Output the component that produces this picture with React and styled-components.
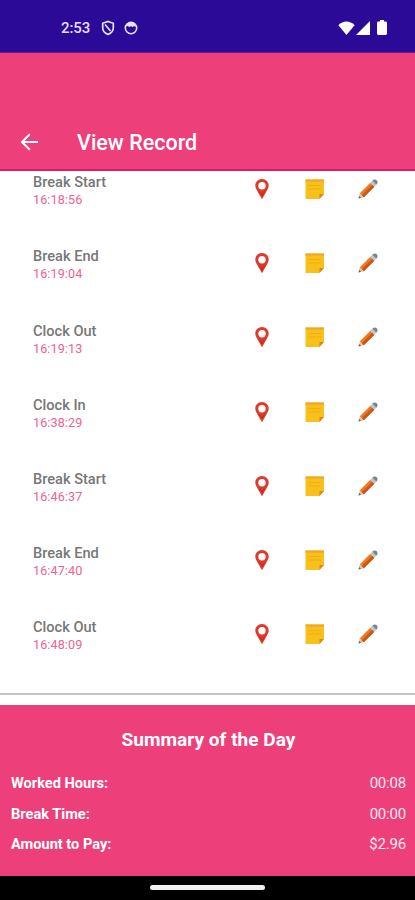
import React from "react";
import styled, { createGlobalStyle } from "styled-components";

const GlobalStyle = createGlobalStyle`
  * { box-sizing: border-box; }
  body { margin: 0; background: #fff; font-family: Roboto, "Liberation Sans", sans-serif; }
`;

const Screen = styled.div`
  width: 415px;
  height: 900px;
  display: flex;
  flex-direction: column;
  overflow: hidden;
  background: #fff;
`;

const StatusBar = styled.div`
  height: 53px;
  flex: none;
  display: flex;
  justify-content: space-between;
  align-items: center;
  padding: 3px 28px 0 61px;
  background: #2a0a96;
  border-bottom: 1px solid #6b1a8c;
  color: #e6defa;
`;

const StatusGroup = styled.div`
  display: flex;
  align-items: center;
  gap: ${(p) => p.$gap}px;
`;

const BatterySlot = styled.span`
  display: flex;
  margin-left: 6px;
`;

const Clock = styled.span`
  font-size: 15px;
  font-weight: 500;
  line-height: 18px;
  width: 29px;
  letter-spacing: -0.1px;
  margin-right: 2px;
`;

const AppBar = styled.header`
  height: 118px;
  flex: none;
  display: flex;
  align-items: flex-end;
  gap: 38px;
  padding: 0 20px 14px;
  background: #ed407a;
  border-bottom: 2px solid #e01868;
  color: #fff;
`;

const BackButton = styled.button`
  display: flex;
  padding: 0;
  margin-bottom: 4px;
  border: 0;
  background: none;
  color: inherit;
`;

const Title = styled.h1`
  margin: 0;
  font-size: 21.5px;
  font-weight: 500;
  line-height: 24px;
`;

const List = styled.ul`
  flex: none;
  height: 521.5px;
  margin: 0;
  padding: 0;
  list-style: none;
  overflow: hidden;

  > li:first-child { margin-top: -19px; }
`;

const Row = styled.li`
  height: 74.2px;
  display: flex;
  align-items: center;
  justify-content: space-between;
  padding: 0 36px 0 33px;
`;

const Entry = styled.div`
  display: flex;
  flex-direction: column;
  padding-top: 4.4px;
`;

const EntryName = styled.span`
  font-size: 14.6px;
  font-weight: 500;
  line-height: 18px;
  color: #777;
`;

const EntryTime = styled.span`
  font-size: 12.6px;
  line-height: 18px;
  letter-spacing: 0.1px;
  color: #f0628f;
`;

const Actions = styled.div`
  display: flex;
  align-items: center;
  gap: 32px;
`;

const Divider = styled.hr`
  flex: none;
  width: 100%;
  height: 2px;
  margin: 0 0 10.5px;
  border: 0;
  background: #c3c3c3;
`;

const Summary = styled.section`
  height: 171px;
  flex: none;
  padding: 23px 9px 0 11px;
  background: #ed407a;
  color: #fff;
`;

const SummaryTitle = styled.h2`
  margin: 0 0 16px;
  font-size: 19.1px;
  font-weight: 700;
  line-height: 24px;
  text-align: center;
`;

const SummaryRow = styled.div`
  height: 30.6px;
  display: flex;
  align-items: center;
  justify-content: space-between;
`;

const Label = styled.span`
  font-size: 14.6px;
  font-weight: 700;
`;

const Value = styled.span`
  font-size: 15px;
  letter-spacing: -0.2px;
  color: #ffe9f1;
`;

const NavBar = styled.footer`
  flex: 1;
  display: flex;
  justify-content: center;
  padding-top: 9px;
  background: #000;
`;

const HomeHandle = styled.div`
  width: 115px;
  height: 5px;
  border-radius: 3px;
  background: #f0f0f0;
`;

const ShieldIcon = () => (
  <svg width="14" height="16" viewBox="0 0 14 16" fill="none" stroke="currentColor" strokeWidth="1.7">
    <path d="M7 1.5 12.3 3.3V7.5C12.3 10.8 10 13.4 7 14.4 4 13.4 1.7 10.8 1.7 7.500V3.300Z" />
    <path d="M4 4.500 9.500 11" />
  </svg>
);

const FaceIcon = () => (
  <svg width="14" height="14" viewBox="0 0 14 14">
    <circle cx="7" cy="7" r="5.700" fill="none" stroke="currentColor" strokeWidth="1.600" />
    <path d="M1.500 5.500C2.200 2.600 4.500 1.300 7 1.300S11.800 2.600 12.500 5.500L9.800 5.200 8.700 6 7 5.300 5 6 3.800 5.100Z" fill="currentColor" />
  </svg>
);

const WifiIcon = () => (
  <svg width="17" height="14" viewBox="0 0 17 14" fill="#fff">
    <path d="M.4 4.200C5-.7 12-.7 16.600 4.200L8.500 14Z" />
  </svg>
);

const SignalIcon = () => (
  <svg width="14" height="14" viewBox="0 0 14 14" fill="#fff">
    <path d="M14 0V14H0Z" />
  </svg>
);

const BatteryIcon = () => (
  <svg width="10" height="15" viewBox="0 0 10 15" fill="#fff">
    <path d="M3 0H7V1.600H8.700Q10 1.600 10 3V13.600Q10 15 8.700 15H1.300Q0 15 0 13.600V3Q0 1.600 1.300 1.600H3Z" />
  </svg>
);

const BackIcon = () => (
  <svg width="19" height="18" viewBox="0 0 19 18" fill="none" stroke="currentColor" strokeWidth="2">
    <path d="M18 9H2.500M9.800 1.200 2 9l7.800 7.800" />
  </svg>
);

const PinIcon = () => (
  <svg width="22" height="22" viewBox="0 0 22 22">
    <path
      fillRule="evenodd"
      fill="#e03a2d"
      d="M11 1C7 1 4.300 4 4.300 7.600c0 2 .9 3.600 2 5.400L11 21.200l4.700-8.200c1.100-1.800 2-3.400 2-5.400C17.700 4 15 1 11 1ZM11 4a3.700 3.700 0 1 1 0 7.400A3.700 3.700 0 0 1 11 4Z"
    />
    <path d="M8.500 13.500 11 17.500l2.500-4" fill="none" stroke="#c2261d" strokeWidth="1" />
  </svg>
);

const NoteIcon = () => (
  <svg width="20" height="20" viewBox="0 0 20 20">
    <path d="M.5.500H19V15L14.500 20H.5Z" fill="#f8c01a" />
    <path d="M.5.500H19V2.500H.5Z" fill="#f1a52a" />
    <path d="M3.500 6.500h12.500M3.500 10h12.500" stroke="#efb012" strokeWidth="1" />
    <path d="M19 15H14.500V20Z" fill="#d98a18" />
  </svg>
);

const PencilIcon = () => (
  <svg width="22" height="22" viewBox="0 0 22 22">
    <path d="M1.500 20.500 2.800 15.200 6.800 19.200Z" fill="#dcc3ad" />
    <path d="M1.500 20.500 2.200 18 4 19.800Z" fill="#59636a" />
    <path d="M2.800 15.200 13.300 4.700 17.300 8.700 6.800 19.200Z" fill="#ec7a25" />
    <path d="M4.800 17.200 15.300 6.700 17.300 8.700 6.800 19.200Z" fill="#cc5715" />
    <path d="M13.300 4.700 15.300 2.700 19.300 6.700 17.300 8.700Z" fill="#b9c6cc" />
    <path d="M15.300 2.700C17 1 18.500 1.100 19.700 2.300S21 5 19.300 6.700Z" fill="#748791" />
  </svg>
);

const records = [
  ["Break Start", "16:18:56"],
  ["Break End", "16:19:04"],
  ["Clock Out", "16:19:13"],
  ["Clock In", "16:38:29"],
  ["Break Start", "16:46:37"],
  ["Break End", "16:47:40"],
  ["Clock Out", "16:48:09"],
];

const totals = [
  ["Worked Hours:", "00:08"],
  ["Break Time:", "00:00"],
  ["Amount to Pay:", "$2.96"],
];

export default function App() {
  return (
    <>
      <GlobalStyle />
      <Screen>
        <StatusBar>
          <StatusGroup $gap={9}>
            <Clock>2:53</Clock>
            <ShieldIcon />
            <FaceIcon />
          </StatusGroup>
          <StatusGroup $gap={1}>
            <WifiIcon />
            <SignalIcon />
            <BatterySlot><BatteryIcon /></BatterySlot>
          </StatusGroup>
        </StatusBar>
        <AppBar>
          <BackButton aria-label="Back"><BackIcon /></BackButton>
          <Title>View Record</Title>
        </AppBar>
        <List>
          {records.map(([name, time]) => (
            <Row key={time}>
              <Entry>
                <EntryName>{name}</EntryName>
                <EntryTime>{time}</EntryTime>
              </Entry>
              <Actions>
                <PinIcon />
                <NoteIcon />
                <PencilIcon />
              </Actions>
            </Row>
          ))}
        </List>
        <Divider />
        <Summary>
          <SummaryTitle>Summary of the Day</SummaryTitle>
          {totals.map(([label, value]) => (
            <SummaryRow key={label}>
              <Label>{label}</Label>
              <Value>{value}</Value>
            </SummaryRow>
          ))}
        </Summary>
        <NavBar><HomeHandle /></NavBar>
      </Screen>
    </>
  );
}
